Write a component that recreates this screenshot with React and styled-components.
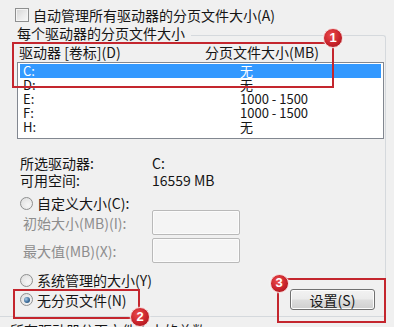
import React from "react";
import styled, { createGlobalStyle } from "styled-components";

const Global = createGlobalStyle`
  html, body { margin: 0; padding: 0; background: #f0f0f0; }
  * { box-sizing: border-box; }
`;

const Page = styled.div`
  position: relative;
  width: 394px;
  height: 327px;
  overflow: hidden;
  background: #f0f0f0;
  font-family: "Noto Sans CJK SC", "Liberation Sans", sans-serif;
  font-size: 14px;
  color: #151515;
  display: flex;
  flex-direction: column;
`;

const CheckRow = styled.label`
  display: flex;
  align-items: center;
  gap: 4px;
  margin: 7px 0 0 15px;
  height: 16px;
  line-height: 16px;
`;

const CheckBox = styled.span`
  width: 14px;
  height: 14px;
  border: 1px solid #8e8f8f;
  background: linear-gradient(135deg, #d4d4d4 0%, #ececec 60%, #f7f7f7 100%);
  box-shadow: inset 0 0 0 1px #f4f4f4;
`;

const GroupHead = styled.div`
  display: flex;
  height: 16px;
  margin-top: 2px;
  margin-right: 8px;
  padding-left: 17px;
  line-height: 16px;
`;

const GroupLine = styled.span`
  flex: 1;
  align-self: flex-end;
  height: 6px;
  margin-left: 6px;
  border-top: 1px solid #d5d9dd;
  border-right: 1px solid #d5d9dd;
  border-top-right-radius: 3px;
`;

const GroupBody = styled.div`
  margin-right: 8px;
  padding: 0 1px 6px 17px;
  border-right: 1px solid #d5d9dd;
  border-bottom: 1px solid #d5d9dd;
  border-bottom-right-radius: 3px;
`;

const ColHead = styled.div`
  display: grid;
  grid-template-columns: 186px 1fr;
  margin-top: 3px;
  padding-left: 2px;
  line-height: 16px;
  height: 16px;
`;

const ListBox = styled.div`
  margin-top: 2px;
  border: 1px solid #828790;
  background: #fff;
  padding: 1px 2px 4px;
`;

const Row = styled.div`
  display: grid;
  grid-template-columns: 217px 1fr;
  height: 14px;
  line-height: 14px;
  font-size: 13px;
  padding-left: 3px;
  background: ${(p) => (p.$selected ? "#3399ff" : "transparent")};
  color: ${(p) => (p.$selected ? "#fff" : "#151515")};
`;

const InfoGrid = styled.div`
  display: grid;
  grid-template-columns: 132px auto;
  grid-auto-rows: 17px;
  line-height: 17px;
  margin-top: 16px;
  padding-left: 3px;
`;

const RadioRow = styled.label`
  display: flex;
  align-items: center;
  gap: 4px;
  height: ${(p) => p.$h || 16}px;
  line-height: 16px;
  margin-top: ${(p) => p.$mt || 0}px;
  padding-left: 3px;
`;

const Radio = styled.span`
  position: relative;
  width: 13px;
  height: 13px;
  border-radius: 50%;
  border: 1px solid #8e8f8f;
  background: radial-gradient(circle at 65% 65%, #f6f6f6 0%, #dcdcdc 100%);
  flex: none;
  &::after {
    content: "";
    display: ${(p) => (p.$checked ? "block" : "none")};
    position: absolute;
    left: 2.5px;
    top: 2.5px;
    width: 6px;
    height: 6px;
    border-radius: 50%;
    background: radial-gradient(circle at 35% 35%, #a9cbe8 0%, #3e6f9c 55%, #1d3f63 100%);
  }
`;

const InputRow = styled.div`
  display: grid;
  grid-template-columns: 129px 88px;
  align-items: center;
  height: 25px;
  margin-top: ${(p) => p.$mt || 0}px;
  padding-left: 6px;
  color: #8d8d8d;
  line-height: 16px;
`;

const TextBox = styled.span`
  display: block;
  height: 25px;
  border: 1px solid #b9b9b9;
  border-radius: 2px;
  background: #f4f4f4;
  box-shadow: inset 0 0 0 1px #fbfbfb;
`;

const BottomRow = styled.div`
  display: flex;
  align-items: center;
  justify-content: space-between;
  height: 21px;
  margin-top: 1px;
`;

const Button = styled.button`
  width: 85px;
  height: 21px;
  margin-right: 9px;
  padding: 0;
  border: 1px solid #707070;
  border-radius: 3px;
  background: linear-gradient(#f2f2f2 0%, #ebebeb 48%, #dddddd 52%, #cfcfcf 100%);
  box-shadow: inset 0 0 0 1px #fcfcfc;
  font-family: inherit;
  font-size: 14px;
  line-height: 18px;
  color: #151515;
`;

const NextTitle = styled.div`
  margin-top: 5px;
  padding-left: 10px;
  line-height: 16px;
  height: 16px;
`;

const RedBox = styled.div`
  position: absolute;
  left: ${(p) => p.$x}px;
  top: ${(p) => p.$y}px;
  width: ${(p) => p.$w}px;
  height: ${(p) => p.$h}px;
  border: 2px solid #c4262e;
  pointer-events: none;
`;

const Badge = styled.div`
  position: absolute;
  left: ${(p) => p.$x - p.$d / 2}px;
  top: ${(p) => p.$y - p.$d / 2}px;
  width: ${(p) => p.$d}px;
  height: ${(p) => p.$d}px;
  border-radius: 50%;
  border: 1.5px solid #f4d6d6;
  background: radial-gradient(circle at 40% 35%, #ec4c4c 0%, #c8232b 55%, #9c1218 100%);
  color: #fff;
  font-family: "Liberation Sans", Arial, sans-serif;
  font-weight: bold;
  font-size: 13px;
  line-height: ${(p) => p.$d - 3}px;
  text-align: center;
  box-shadow: 0 0 2px rgba(255, 255, 255, 0.8);
`;

const rows = [
  { d: "C:", s: "无", sel: true },
  { d: "D:", s: "无" },
  { d: "E:", s: "1000 - 1500" },
  { d: "F:", s: "1000 - 1500" },
  { d: "H:", s: "无" },
];

export default function App() {
  return (
    <Page>
      <Global />
      <CheckRow>
        <CheckBox />
        <span>自动管理所有驱动器的分页文件大小(A)</span>
      </CheckRow>
      <GroupHead>
        <span>每个驱动器的分页文件大小</span>
        <GroupLine />
      </GroupHead>
      <GroupBody>
        <ColHead>
          <span>驱动器 [卷标](D)</span>
          <span>分页文件大小(MB)</span>
        </ColHead>
        <ListBox>
          {rows.map((r) => (
            <Row key={r.d} $selected={r.sel}>
              <span>{r.d}</span>
              <span>{r.s}</span>
            </Row>
          ))}
        </ListBox>
        <InfoGrid>
          <span>所选驱动器:</span>
          <span>C:</span>
          <span>可用空间:</span>
          <span>16559 MB</span>
        </InfoGrid>
        <RadioRow $mt={7} $h={14}>
          <Radio />
          <span>自定义大小(C):</span>
        </RadioRow>
        <InputRow>
          <span>初始大小(MB)(I):</span>
          <TextBox />
        </InputRow>
        <InputRow $mt={3}>
          <span>最大值(MB)(X):</span>
          <TextBox />
        </InputRow>
        <RadioRow $mt={9}>
          <Radio />
          <span>系统管理的大小(Y)</span>
        </RadioRow>
        <BottomRow>
          <RadioRow>
            <Radio $checked />
            <span>无分页文件(N)</span>
          </RadioRow>
          <Button>设置(S)</Button>
        </BottomRow>
      </GroupBody>
      <NextTitle>所有驱动器分页文件大小的总数</NextTitle>

      <RedBox $x={12} $y={42} $w={322} $h={46} />
      <RedBox $x={13} $y={289} $w={127} $h={30} />
      <RedBox $x={277} $y={278} $w={109} $h={45} />
      <Badge $x={333} $y={38} $d={20}>1</Badge>
      <Badge $x={140} $y={317} $d={20}>2</Badge>
      <Badge $x={279} $y={283} $d={19}>3</Badge>
    </Page>
  );
}
